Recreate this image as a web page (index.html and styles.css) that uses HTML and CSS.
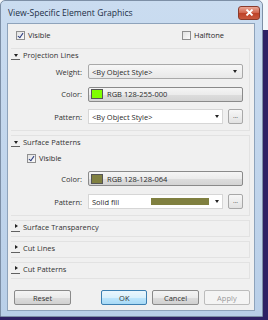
FILE: index.html
```html
<!DOCTYPE html>
<html lang="en">
<head>
    <meta charset="UTF-8">
    <title>View-Specific Element Graphics</title>
    <link rel="stylesheet" href="styles.css">
</head>
<body>
    <div class="window">
        <div class="titlebar">
            <span class="title">View-Specific Element Graphics</span>
            <span class="close">
                <svg width="9" height="7" viewBox="0 0 9 7"><path d="M1.5 0.5 L7.5 6.5 M7.5 0.5 L1.5 6.5" stroke="#fff" stroke-width="1.8"/></svg>
            </span>
        </div>

        <div class="client">
            <div class="toprow">
                <label class="check"><span class="box checked"></span>Visible</label>
                <label class="check"><span class="box"></span>Halftone</label>
            </div>

            <div class="section open">
                <div class="head"><span class="arrow down"></span>Projection Lines</div>
                <div class="body">
                    <div class="row">
                        <span class="label">Weight:</span>
                        <div class="combo wide">&lt;By Object Style&gt;<span class="drop"></span></div>
                    </div>
                    <div class="row">
                        <span class="label">Color:</span>
                        <div class="colorbtn"><span class="swatch green"></span>RGB 128-255-000</div>
                    </div>
                    <div class="row">
                        <span class="label">Pattern:</span>
                        <div class="combo">&lt;By Object Style&gt;<span class="drop"></span></div>
                        <span class="more">...</span>
                    </div>
                </div>
            </div>

            <div class="section open">
                <div class="head"><span class="arrow down"></span>Surface Patterns</div>
                <div class="body surface">
                    <label class="check sub"><span class="box checked"></span>Visible</label>
                    <div class="row">
                        <span class="label">Color:</span>
                        <div class="colorbtn"><span class="swatch olive"></span>RGB 128-128-064</div>
                    </div>
                    <div class="row">
                        <span class="label">Pattern:</span>
                        <div class="combo">Solid fill<span class="fill"></span><span class="drop"></span></div>
                        <span class="more">...</span>
                    </div>
                </div>
            </div>

            <div class="section">
                <div class="head"><span class="arrow right"></span>Surface Transparency</div>
            </div>
            <div class="section">
                <div class="head"><span class="arrow right"></span>Cut Lines</div>
            </div>
            <div class="section">
                <div class="head"><span class="arrow right"></span>Cut Patterns</div>
            </div>

            <div class="buttons">
                <span class="btn reset">Reset</span>
                <span class="btn default">OK</span>
                <span class="btn">Cancel</span>
                <span class="btn disabled">Apply</span>
            </div>
        </div>
    </div>
</body>
</html>
```

FILE: styles.css
```css
body {
    margin: 0;
    width: 268px;
    height: 320px;
    background: linear-gradient(#f4f7fb 0, #f4f7fb 30px, #2e2164 30px);
    font-family: "Open Sans", "DejaVu Sans", sans-serif;
    font-size: 7.5px;
    color: #2a2a2a;
    overflow: hidden;
}

.window {
    width: 263px;
    height: 317px;
    background: linear-gradient(#cadcf0, #b9cfe8);
    border: 1px solid #7d8fa6;
    border-radius: 5px 5px 0 0;
    box-sizing: border-box;
    padding: 0 7px 5px 6px;
}

.titlebar {
    height: 22px;
    display: flex;
    align-items: center;
    justify-content: space-between;
}

.title {
    font-size: 8.6px;
    color: #1d2f47;
    margin-left: 1px;
    margin-top: 2px;
}

.close {
    width: 20px;
    height: 12px;
    margin-right: -5px;
    margin-top: 1px;
    background: linear-gradient(#eba896, #d0634b 50%, #bd4127 51%, #c9583d);
    border: 1px solid #8a3b2c;
    border-radius: 3px;
    display: flex;
    align-items: center;
    justify-content: center;
}

.client {
    height: 288px;
    box-sizing: border-box;
    background: #f0f0f0;
    border: 1px solid #8ea3bb;
    padding: 0 4px 0 3px;
}

.toprow {
    display: flex;
    justify-content: space-between;
    align-items: center;
    height: 22px;
    padding: 0 26px 0 5px;
}

.check {
    display: flex;
    align-items: center;
    gap: 3px;
}

.box {
    width: 7px;
    height: 7px;
    border: 1px solid #8f8f8f;
    background: linear-gradient(135deg, #e2e2e2, #fbfbfb);
    position: relative;
}

.box.checked::after {
    content: "";
    position: absolute;
    left: 2px;
    top: 0;
    width: 2px;
    height: 5px;
    border: solid #2b3d80;
    border-width: 0 1.3px 1.3px 0;
    transform: rotate(35deg);
}

.section {
    margin-top: 4px;
    border: 1px solid #e2e2e2;
    border-left: none;
    padding-bottom: 4px;
}

.section.open {
    padding-bottom: 6px;
}

.toprow + .section {
    margin-top: 2px;
}

.head {
    height: 11px;
    display: flex;
    align-items: center;
    position: relative;
    padding-left: 12px;
    color: #333;
}

.head::after {
    content: "";
    position: absolute;
    left: 0;
    bottom: 0;
    width: 9px;
    border-bottom: 1px solid #606060;
}

.arrow {
    position: absolute;
    width: 0;
    height: 0;
}

.arrow.down {
    left: 3px;
    top: 5px;
    border-left: 2.5px solid transparent;
    border-right: 2.5px solid transparent;
    border-top: 3px solid #222;
}

.arrow.right {
    left: 4px;
    top: 3px;
    border-top: 2.5px solid transparent;
    border-bottom: 2.5px solid transparent;
    border-left: 3px solid #222;
}

.body {
    padding-top: 4px;
    display: flex;
    flex-direction: column;
    gap: 7.5px;
}

.body.surface {
    padding-top: 5px;
    gap: 8px;
}

.check.sub {
    margin-left: 16px;
    height: 12px;
    margin-bottom: -1px;
}

.row {
    display: flex;
    align-items: center;
    height: 15px;
}

.label {
    width: 71px;
    margin-right: 6px;
    text-align: right;
    color: #333;
}

.combo {
    width: 135px;
    height: 15px;
    background: #fff;
    border: 1px solid #d6d6d6;
    box-sizing: border-box;
    display: flex;
    align-items: center;
    padding-left: 3px;
    position: relative;
}

.combo.wide {
    width: 155px;
    border-color: #a9a9a9;
    border-radius: 2px;
    background: linear-gradient(#f7f7f7, #e8e8e8);
}

.drop {
    position: absolute;
    right: 3px;
    top: 5px;
    border-left: 2.5px solid transparent;
    border-right: 2.5px solid transparent;
    border-top: 3px solid #222;
}

.combo.wide .drop {
    right: 5px;
}

.fill {
    position: absolute;
    left: 62px;
    top: 3px;
    width: 58px;
    height: 7px;
    background: #808040;
}

.more {
    width: 15px;
    height: 15px;
    box-sizing: border-box;
    margin-left: 5px;
    border: 1px solid #a8a8a8;
    border-radius: 2px;
    background: linear-gradient(#f7f7f7, #e2e2e2);
    font-size: 6.5px;
    text-align: center;
    line-height: 12px;
    color: #555;
}

.colorbtn {
    width: 155px;
    height: 15px;
    box-sizing: border-box;
    border: 1px solid #8a8a8a;
    border-radius: 2px;
    background: linear-gradient(#f5f5f5, #ececec 50%, #dddddd 51%, #d4d4d4);
    display: flex;
    align-items: center;
    padding-left: 2px;
    gap: 4px;
}

.swatch {
    width: 12px;
    height: 10px;
    border: 1px solid #555;
    box-sizing: border-box;
}

.swatch.green {
    background: #80ff00;
}

.swatch.olive {
    background: #808040;
}

.buttons {
    display: flex;
    margin-top: 11px;
    padding-left: 3px;
    gap: 5px;
}

.btn {
    width: 47px;
    height: 15px;
    box-sizing: border-box;
    border: 1px solid #8a8a8a;
    border-radius: 2px;
    background: linear-gradient(#f4f4f4, #ebebeb 50%, #dddddd 51%, #d0d0d0);
    display: flex;
    align-items: center;
    justify-content: center;
    color: #333;
}

.btn.reset {
    width: 58px;
    margin-right: 25px;
}

.btn.default {
    border-color: #3c7fb1;
    background: linear-gradient(#eaf6fd, #d9f0fc 50%, #bee6fd 51%, #a7d9f5);
}

.btn.disabled {
    color: #9a9a9a;
    border-color: #bcbcbc;
    background: #f4f4f4;
}
```
